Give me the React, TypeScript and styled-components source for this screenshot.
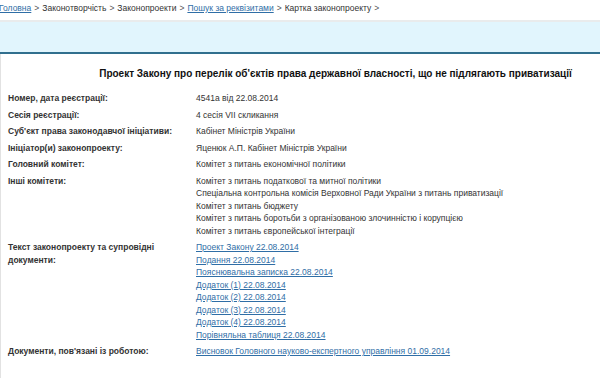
import styled, { createGlobalStyle } from "styled-components";

const GlobalStyle = createGlobalStyle`
  html, body {
    margin: 0;
    padding: 0;
    background: #fff;
  }
  body {
    font-family: "Liberation Sans", Arial, sans-serif;
    font-size: 8.5px;
    color: #333;
    overflow: hidden;
  }
`;

const Page = styled.div`
  width: 670px;
  height: 378px;
  overflow: hidden;
`;

const Breadcrumbs = styled.div`
  height: 20px;
  box-sizing: border-box;
  padding: 2px 0 0 0;
  margin-left: -1px;
  line-height: 12px;
  white-space: nowrap;
  color: #333;
`;

const CrumbLink = styled.a`
  color: #2f6ea6;
  text-decoration: underline;
`;

const Sep = styled.span`
  color: #555;
  margin: 0 3px;
`;

const Band = styled.div`
  height: 30px;
  background: #e1f5fd;
  border-top: 2px solid #e9ebec;
  border-bottom: 2px solid #316f8e;
`;

const Content = styled.div`
  border-left: 1px solid #e2e2e2;
  padding: 13px 0 40px 0;
`;

const Title = styled.h1`
  margin: 0 0 10px 0;
  text-align: center;
  font-size: 10px;
  line-height: 13px;
  font-weight: bold;
  color: #111;
`;

const Table = styled.div`
  display: grid;
  grid-template-columns: 188px 1fr;
  padding-left: 7px;
`;

const Label = styled.div`
  padding: 2px 16px 2px 0;
  line-height: 12.5px;
  font-weight: bold;
  color: #333;
`;

const Value = styled.div`
  padding: 2px 0;
  line-height: 12.5px;
  color: #333;
  display: flex;
  flex-direction: column;
`;

const DocLink = styled.a`
  color: #2f6ea6;
  text-decoration: underline;
  align-self: flex-start;
`;

const rows: { label: string; values: string[]; links?: boolean }[] = [
  { label: "Номер, дата реєстрації:", values: ["4541а від 22.08.2014"] },
  { label: "Сесія реєстрації:", values: ["4 сесія VII скликання"] },
  { label: "Суб'єкт права законодавчої ініціативи:", values: ["Кабінет Міністрів України"] },
  { label: "Ініціатор(и) законопроекту:", values: ["Яценюк А.П. Кабінет Міністрів України"] },
  { label: "Головний комітет:", values: ["Комітет з питань економічної політики"] },
  {
    label: "Інші комітети:",
    values: [
      "Комітет з питань податкової та митної політики",
      "Спеціальна контрольна комісія Верховної Ради України з питань приватизації",
      "Комітет з питань бюджету",
      "Комітет з питань боротьби з організованою злочинністю і корупцією",
      "Комітет з питань європейської інтеграції",
    ],
  },
  {
    label: "Текст законопроекту та супровідні документи:",
    links: true,
    values: [
      "Проект Закону 22.08.2014",
      "Подання 22.08.2014",
      "Пояснювальна записка 22.08.2014",
      "Додаток (1) 22.08.2014",
      "Додаток (2) 22.08.2014",
      "Додаток (3) 22.08.2014",
      "Додаток (4) 22.08.2014",
      "Порівняльна таблиця 22.08.2014",
    ],
  },
  {
    label: "Документи, пов'язані із роботою:",
    links: true,
    values: ["Висновок Головного науково-експертного управління 01.09.2014"],
  },
];

function App() {
  return (
    <Page>
      <GlobalStyle />
      <Breadcrumbs>
        <CrumbLink href="#">Головна</CrumbLink>
        <Sep>&gt;</Sep>Законотворчість<Sep>&gt;</Sep>Законопроекти<Sep>&gt;</Sep>
        <CrumbLink href="#">Пошук за реквізитами</CrumbLink>
        <Sep>&gt;</Sep>Картка законопроекту<Sep>&gt;</Sep>
      </Breadcrumbs>
      <Band />
      <Content>
        <Title>
          Проект Закону про перелік об'єктів права державної власності, що не підлягають приватизації
        </Title>
        <Table>
          {rows.map((row) => (
            <>
              <Label key={row.label}>{row.label}</Label>
              <Value key={row.label + "-v"}>
                {row.values.map((v) =>
                  row.links ? (
                    <DocLink key={v} href="#">
                      {v}
                    </DocLink>
                  ) : (
                    <span key={v}>{v}</span>
                  )
                )}
              </Value>
            </>
          ))}
        </Table>
      </Content>
    </Page>
  );
}

export default App;
